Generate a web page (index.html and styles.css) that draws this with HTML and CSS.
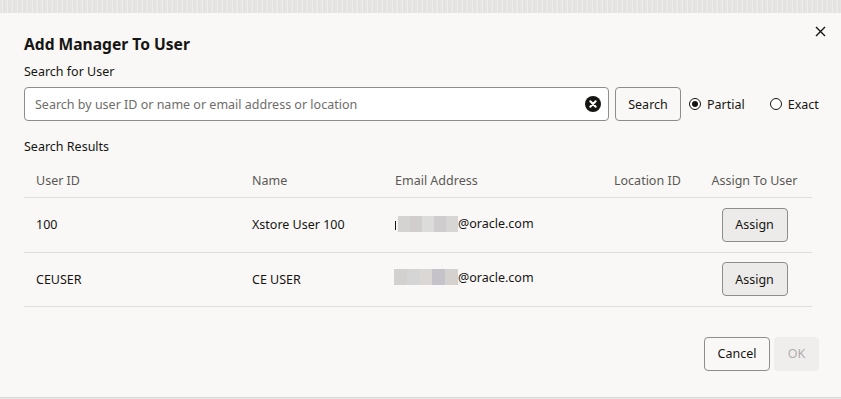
FILE: index.html
```html
<!DOCTYPE html>
<html lang="en">
<head>
  <meta charset="UTF-8" />
  <title>Add Manager To User</title>
  <link rel="stylesheet" href="styles.css">
</head>
<body>
  <div class="backdrop"></div>
  <div class="dialog">
    <button class="dialog-close" aria-label="Close">
      <svg width="11" height="11" viewBox="0 0 11 11"><path d="M1 1 L10 10 M10 1 L1 10" stroke="#161513" stroke-width="1.4" fill="none"/></svg>
    </button>
    <div class="dialog-title">Add Manager To User</div>
    <div class="field-label">Search for User</div>
    <div class="search-row">
      <div class="search-input">
        <span class="placeholder">Search by user ID or name or email address or location</span>
        <svg class="clear-icon" width="16" height="16" viewBox="0 0 16 16">
          <circle cx="8" cy="8" r="8" fill="#161513"/>
          <path d="M5.3 5.3 L10.7 10.7 M10.7 5.3 L5.3 10.7" stroke="#fff" stroke-width="2" stroke-linecap="round"/>
        </svg>
      </div>
      <button class="btn">Search</button>
      <label class="radio"><span class="radio-dot checked"></span>Partial</label>
      <label class="radio"><span class="radio-dot"></span>Exact</label>
    </div>
    <div class="section-label">Search Results</div>
    <table class="results">
      <colgroup>
        <col style="width:216px">
        <col style="width:143px">
        <col style="width:219px">
        <col style="width:95px">
        <col>
      </colgroup>
      <thead>
        <tr>
          <th>User ID</th>
          <th>Name</th>
          <th>Email Address</th>
          <th>Location ID</th>
          <th class="center">Assign To User</th>
        </tr>
      </thead>
      <tbody>
        <tr>
          <td>100</td>
          <td>Xstore User 100</td>
          <td><span class="email"><span class="stem"></span><span class="blur">
            <i style="background:#d5d3d2"></i><i style="background:#d2cecd"></i><i style="background:#dcdcdb"></i><i style="background:#cfcdcd"></i><i style="background:#d8d6d4"></i>
          </span>@oracle.com</span></td>
          <td></td>
          <td class="center"><button class="btn btn-assign">Assign</button></td>
        </tr>
        <tr>
          <td>CEUSER</td>
          <td>CE USER</td>
          <td><span class="email"><span class="blur wide">
            <i style="background:#d3d1cf"></i><i style="background:#d6d5d6"></i><i style="background:#dad7d4"></i><i style="background:#c6c2c9"></i><i style="background:#d4d1ce"></i>
          </span>@oracle.com</span></td>
          <td></td>
          <td class="center"><button class="btn btn-assign">Assign</button></td>
        </tr>
      </tbody>
    </table>
    <div class="dialog-footer">
      <button class="btn">Cancel</button>
      <button class="btn btn-disabled">OK</button>
    </div>
  </div>
</body>
</html>
```

FILE: styles.css
```css
* {
  box-sizing: border-box;
  margin: 0;
  padding: 0;
  font-family: 'Noto Sans', 'Open Sans', sans-serif;
}
body {
  background: #e9e8e6;
  color: #161513;
  font-size: 12.5px;
}
.backdrop {
  height: 13px;
  background: repeating-linear-gradient(90deg, #e6e5e3 0 2px, #eeedeb 2px 3px, #e3e2e0 3px 5px);
}
.dialog {
  position: relative;
  background: #f9f8f6;
  height: 385px;
  border-bottom: 1px solid #d8d7d5;
  padding: 20px 22px 0 24px;
  display: flex;
  flex-direction: column;
}
.dialog-close {
  position: absolute;
  top: 13px;
  right: 15px;
  width: 11px;
  height: 11px;
  border: none;
  background: none;
  display: flex;
}
.dialog-title {
  font-size: 15.6px;
  font-weight: 700;
  line-height: 22px;
}
.field-label {
  margin-top: 8px;
  line-height: 18px;
}
.search-row {
  margin-top: 6px;
  display: flex;
  align-items: center;
}
.search-input {
  flex: 0 0 585px;
  height: 34px;
  border: 1px solid #8f8d8b;
  border-radius: 4px;
  background: #fff;
  display: flex;
  align-items: center;
  justify-content: space-between;
  padding: 0 7px 0 10px;
}
.placeholder {
  color: #6f6d6a;
}
.btn {
  height: 34px;
  padding: 0 12px;
  border: 1px solid #8f8d8b;
  border-radius: 4px;
  background: #f9f8f6;
  color: #161513;
  font-size: 12.5px;
}
.search-row .btn {
  margin-left: 6px;
  width: 66px;
  padding: 0;
}
.radio {
  display: flex;
  align-items: center;
  gap: 6px;
  margin-left: 8px;
}
.radio + .radio {
  margin-left: 25px;
}
.radio-dot {
  width: 12px;
  height: 12px;
  border: 1px solid #161513;
  border-radius: 50%;
  background: #fff;
  position: relative;
}
.radio-dot.checked::after {
  content: '';
  position: absolute;
  left: 2px;
  top: 2px;
  width: 6px;
  height: 6px;
  border-radius: 50%;
  background: #161513;
}
.section-label {
  margin-top: 17px;
  line-height: 18px;
}
.results {
  margin-top: 8px;
  width: 788px;
  table-layout: fixed;
  border-collapse: collapse;
}
.results th {
  font-weight: 400;
  color: #5a5855;
  text-align: left;
  height: 33px;
  padding: 0 0 0 12px;
  border-bottom: 1px solid #dfdedc;
}
.results td {
  height: 54px;
  padding: 0 0 0 12px;
  border-bottom: 1px solid #dfdedc;
}
.results tbody tr:first-child td {
  height: 55px;
}
.results .center {
  text-align: center;
  padding: 0;
}
.email {
  display: inline-flex;
  align-items: center;
}
.stem {
  width: 1px;
  height: 9px;
  margin: 3px 2px 0 0;
  background: #161513;
}
.blur {
  display: inline-flex;
  height: 16px;
  width: 60px;
}
.blur.wide {
  margin-left: -1px;
  width: 64px;
}
.blur i {
  flex: 1;
  height: 100%;
}
.btn-assign {
  background: #ecebe9;
  width: 66px;
  padding: 0;
}
.dialog-footer {
  margin-top: 30px;
  display: flex;
  justify-content: flex-end;
  gap: 4px;
}
.dialog-footer .btn {
  min-width: 45px;
}
.dialog-footer .btn:first-child {
  width: 66px;
  padding: 0;
}
.btn-disabled {
  border-color: #efeeec;
  background: #efeeec;
  color: #b0aeab;
}
```
